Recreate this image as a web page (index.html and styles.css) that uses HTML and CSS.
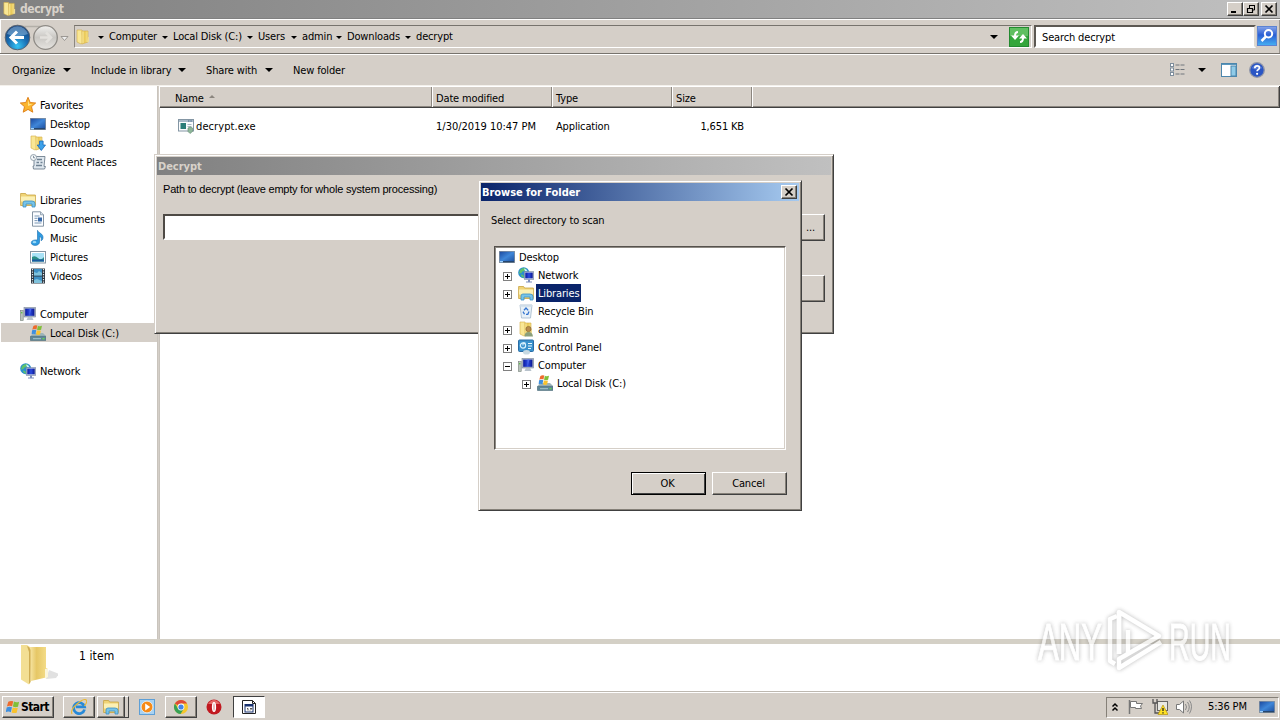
FILE: index.html
```html
<!DOCTYPE html>
<html lang="en">
<head>
<meta charset="utf-8">
<title>decrypt</title>
<link rel="stylesheet" href="styles.css">
</head>
<body>
<svg class="defs" width="0" height="0">
  <defs>
    <linearGradient id="gFold" x1="0" x2="1"><stop offset="0" stop-color="#fff2a8"/><stop offset=".45" stop-color="#e9c755"/><stop offset="1" stop-color="#f8e48c"/></linearGradient>
    <linearGradient id="gDesk" x1="0" y1="0" x2="1" y2="1"><stop offset="0" stop-color="#1c4aa0"/><stop offset=".5" stop-color="#3f86d8"/><stop offset="1" stop-color="#1d4f9f"/></linearGradient>
    <linearGradient id="gScr" x1="0" x2="1"><stop offset="0" stop-color="#0a1aa0"/><stop offset=".5" stop-color="#2b4be0"/><stop offset="1" stop-color="#0b1690"/></linearGradient>
    <radialGradient id="gBack" cx=".5" cy=".85" r=".8"><stop offset="0" stop-color="#35c4f4"/><stop offset=".5" stop-color="#1a6fb4"/><stop offset="1" stop-color="#123f7c"/></radialGradient>
    <linearGradient id="gFwd" x1="0" y1="0" x2="0" y2="1"><stop offset="0" stop-color="#f1f0ee"/><stop offset=".5" stop-color="#c9c7c3"/><stop offset="1" stop-color="#e6e4e0"/></linearGradient>
    <linearGradient id="gBig" x1="0" x2="1"><stop offset="0" stop-color="#f9e9ac"/><stop offset=".4" stop-color="#e6c766"/><stop offset="1" stop-color="#f6e08e"/></linearGradient>
    <symbol id="folder" viewBox="0 0 16 16"><path d="M2 1h5l1 13-2 1-4-2z" fill="#f9e795" stroke="#d3ad45" stroke-width=".6"/><path d="M7 2h6v11l-6 2z" fill="url(#gFold)" stroke="#d3ad45" stroke-width=".6"/><path d="M13 8h1v5h-2z" fill="#efdc96"/></symbol>
    <symbol id="desktop" viewBox="0 0 16 16"><rect x="0" y="2" width="16" height="12" fill="#8c949c"/><rect x=".7" y="2.7" width="14.6" height="10" fill="url(#gDesk)"/><rect x="1" y="12" width="14" height="1.4" fill="#24466f"/><rect x="1" y="12" width="3" height="1.4" fill="#9bd0ff"/></symbol>
    <symbol id="downloads" viewBox="0 0 16 16"><use href="#folder" x="-1" y="0"/><path d="M9.500 6h3.600v4h2.400L11.300 15.500 7.200 10h2.300z" fill="#3ba1ea" stroke="#1a69b8" stroke-width=".8"/></symbol>
    <symbol id="recent" viewBox="0 0 16 16"><path d="M4 2.500h11l-1 10h1.500l-1 2.500H3.500L3 12h1z" fill="#dfe7ee" stroke="#71808e" stroke-width=".9"/><path d="M7 5.500h5M6.500 8.500h2.500m1.500 0h2M6 11.500h6" stroke="#6f8293" stroke-width="1.400"/><circle cx="3.500" cy="3.500" r="3" fill="#f6f9fb" stroke="#8a98a4" stroke-width=".9"/><path d="M3.500 1.800v2h1.500" fill="none" stroke="#526679" stroke-width=".7"/></symbol>
    <symbol id="star" viewBox="0 0 16 16"><path d="M8 .3l2.200 5.200 5.500.5-4.200 3.700 1.300 5.500L8 12.400l-4.800 2.800 1.300-5.500L.3 6l5.500-.5z" fill="#fbb52c" stroke="#dc7c14" stroke-width=".9"/><path d="M8 3l1.300 4 3.500.3L8 9z" fill="#ffe48a"/></symbol>
    <symbol id="libs" viewBox="0 0 16 16"><path d="M.6 1.500h5l1 1.500h8.800v10.500H.6z" fill="#f0d477" stroke="#c8a341" stroke-width=".8"/><path d="M1 4.500h14v5H1z" fill="#fbf0b4"/><path d="M3 15V11q0-2 2-2h7q3 0 3 2.500V15h-3v-3H6v3z" fill="#77c4e8" stroke="#3e8fc4" stroke-width=".8"/></symbol>
    <symbol id="docs" viewBox="0 0 16 16"><path d="M2.500.8h8l3 3v11.400h-11z" fill="#fbfdff" stroke="#78899a" stroke-width=".9"/><path d="M10.500.8v3h3" fill="#d4e0ea" stroke="#78899a" stroke-width=".7"/><path d="M4.500 5h5M4.500 7.300h3M4.500 9.600h3M4.500 12h7" stroke="#7b97b4"/><rect x="8" y="6.500" width="4" height="4" fill="#3768a8"/></symbol>
    <symbol id="music" viewBox="0 0 16 16"><path d="M7.500.3c1 3 6 3.200 5.500 7.700-.2 1.700-1.200 2.500-2 2.700.9-2.700-.3-3.900-1.500-4.200V12c0 2.200-2 3.400-4.300 3.400-2.200 0-3.900-.8-3.900-2.700S3.500 9.700 7.500 10z" fill="#2f9be0" stroke="#1a6fb0" stroke-width=".6"/><ellipse cx="4.500" cy="12.200" rx="1.900" ry="1.100" fill="#9bdaf8"/></symbol>
    <symbol id="pics" viewBox="0 0 16 16"><rect x=".5" y="2.500" width="15" height="11.500" fill="#fff" stroke="#8695a2"/><rect x="2" y="4" width="12" height="8.500" fill="#a9e2f6"/><path d="M2 8q3-2 6 1t6-1v4.500H2z" fill="#2a8f86"/><path d="M2 10.500h12v2H2z" fill="#1b5aa0"/></symbol>
    <symbol id="video" viewBox="0 0 16 16"><rect x="1" y=".5" width="14" height="15" fill="#2d3640"/><rect x="4" y="1" width="8" height="6.500" fill="#3d8fc4"/><rect x="4" y="8.500" width="8" height="6.500" fill="#3d8fc4"/><path d="M4 4l3 1 2-2 3 2v2.500H4zM4 12l3-1 5 2v2H4z" fill="#7fc2dc"/><path d="M2.500 1v14M13.500 1v14" stroke="#e6edf2" stroke-width="1.200" stroke-dasharray="1.300 1.200"/></symbol>
    <symbol id="computer" viewBox="0 0 16 16"><rect x=".4" y="4.500" width="2.800" height="10" fill="#b9c2bc" stroke="#77827a" stroke-width=".6"/><rect x="1" y="6" width="1.400" height="1.400" fill="#5fc04c"/><rect x="4" y="1.500" width="11.600" height="9.500" fill="#aeb9c8" stroke="#79859a" stroke-width=".6"/><rect x="5.200" y="2.600" width="9.200" height="7.200" fill="url(#gScr)"/><path d="M9.500 2.600h2L9.500 9.800z" fill="#4c68e8"/><path d="M8 11h4l1.500 3h-7z" fill="#b8c2cc"/></symbol>
    <symbol id="flag" viewBox="0 0 16 16"><path d="M2.500 2.500Q5 .8 7.700 2L6.600 7.300Q4 6 1 7.500z" fill="#ee6b2d"/><path d="M8.500 2.200Q11 3.600 14 2.400L12.800 7.800Q10 8.900 7.400 7.500z" fill="#80bf38"/><path d="M.8 8.400Q3.500 7 6.400 8.200L5.200 13.500Q2.500 12.200-.3 13.600z" fill="#3e8fdf"/><path d="M7.200 8.400Q10 9.700 12.600 8.700L11.400 14Q8.800 15.100 6 13.800z" fill="#f9c22e"/></symbol>
    <symbol id="disk" viewBox="0 0 16 16"><path d="M3 8h10l3 3v4H.5v-3.500z" fill="#9db4ba"/><path d="M.5 11.300h15.300v4.300H.5z" fill="#5f8797" stroke="#41616f" stroke-width=".5"/><path d="M3 13.700h8" stroke="#a9c8cf"/><rect x="12.500" y="13" width="2" height="1.300" fill="#63db49"/><svg x="1.500" y="-1" width="12" height="12" viewBox="0 0 16 16"><use href="#flag" width="16" height="16"/></svg></symbol>
    <symbol id="network" viewBox="0 0 16 16"><circle cx="5.700" cy="5.700" r="5.500" fill="#2a8fce"/><path d="M2 3Q5 0 8 1.500 7 4 4.500 4.500 3.500 7 1 6.500zM3 7.500q3 0 3 3.400Q3 10 3 7.500z" fill="#5fc36b"/><path d="M6 1.500q3 .5 3.500 3L7 4z" fill="#d2f3ff"/><rect x="6.300" y="4.700" width="9.400" height="7.600" fill="#c3cddd" stroke="#7583a0" stroke-width=".6"/><rect x="7.300" y="5.600" width="7.400" height="5.700" fill="url(#gScr)"/><path d="M10 12.500h2v2h2v1H8v-1h2z" fill="#7b8dbd"/></symbol>
    <symbol id="bin" viewBox="0 0 16 16"><path d="M2 2h12l-1.500 13h-9z" fill="#e8f1f8" stroke="#a2b6c9" stroke-width=".8"/><path d="M2 2h12v1.700H2z" fill="#cfdde9"/><path d="M6 7.200L8 5l2.200 2.400M11 8.500L9.800 11.300H8M6.500 11.300L5 8.600" fill="none" stroke="#3474cf" stroke-width="1.300"/></symbol>
    <symbol id="user" viewBox="0 0 16 16"><use href="#folder"/><circle cx="10.500" cy="8" r="2.600" fill="#b98c4c" stroke="#7c5b2c" stroke-width=".6"/><path d="M6.500 15.500q0-4.500 4-4.500t4.500 4.500z" fill="#8a9f7b"/></symbol>
    <symbol id="cpl" viewBox="0 0 16 16"><rect x=".5" y="1" width="15" height="11.500" rx="1" fill="#3a92cd" stroke="#2a6ca5"/><circle cx="5" cy="6.500" r="2.600" fill="none" stroke="#d9f3ff" stroke-width="1.200"/><path d="M5 6.500V4h2.500M10 4.500h4M10 7h4M10 9.500h3" stroke="#e8f8ff" fill="none"/><ellipse cx="8.500" cy="13.300" rx="3.500" ry="2.300" fill="#c7d9e2"/></symbol>
    <symbol id="exe" viewBox="0 0 16 16"><rect x=".5" y="1.500" width="15" height="11.500" fill="#fafcfd" stroke="#8496a4"/><path d="M1 3h14" stroke="#a9bac8" stroke-width="2" /><path d="M10 3h4" stroke="#466a8c" stroke-dasharray="1 .6"/><rect x="2.500" y="5" width="5.500" height="6" fill="#2a7d78"/><path d="M9.500 6.500h4M9.500 8.500h4" stroke="#a8b9c3"/><path d="M10 10q2-2 4.500 0v3.500l-2.500 2-2-2z" fill="#8fb79a" stroke="#628b70" stroke-width=".6"/></symbol>
  </defs>
</svg>

<div class="screen">
  <header class="titlebar">
    <svg class="title-icon" viewBox="0 0 16 16"><use href="#folder"/></svg>
    <span class="title-text">decrypt</span>
    <div class="win-buttons">
      <button class="wb"><svg viewBox="0 0 12 10"><path d="M2 8h5" stroke="#000" stroke-width="2"/></svg></button>
      <button class="wb"><svg viewBox="0 0 12 10"><path d="M4.500 1v3M4 1.500h6M9.500 1v5H8" fill="none" stroke="#000"/><path d="M2.500 4.500h5v4h-5zM2 4.500h6" fill="none" stroke="#000" stroke-width="1.200"/></svg></button>
      <button class="wb wb-close"><svg viewBox="0 0 12 10"><path d="M2.500 1.500l7 7m0-7l-7 7" stroke="#000" stroke-width="1.700"/></svg></button>
    </div>
  </header>

  <nav class="navbar">
    <svg class="nav-arrows" viewBox="0 0 72 30">
      <path d="M22 5.500H42" fill="none" stroke="#b3afa8" stroke-width="1.500"/>
      <circle cx="17.500" cy="16.500" r="12.300" fill="url(#gBack)" stroke="#5b6470"/>
      <path d="M7 13a11 11 0 0 1 21 0q-10 4-21 0z" fill="#8fb9df" opacity=".55"/>
      <path d="M11 16.500h13M17 10.500l-6 6 6 6" fill="none" stroke="#fff" stroke-width="3"/>
      <circle cx="45.500" cy="16.500" r="11.800" fill="url(#gFwd)" stroke="#8d8a85" stroke-width="1.300"/>
      <path d="M40 16.500h11M46 11.500l5 5-5 5" fill="none" stroke="#e3e1dd" stroke-width="2.500"/>
      <path d="M61 15.500h7l-3.500 4z" fill="#eee" stroke="#8a8782" stroke-width=".8"/>
    </svg>
    <div class="address">
      <svg class="ic" viewBox="0 0 16 16"><use href="#folder"/></svg>
      <div class="crumbs"><i></i><span class="c1">Computer</span><i></i><span class="c2">Local Disk (C:)</span><i></i><span class="c3">Users</span><i></i><span class="c4">admin</span><i></i><span class="c5">Downloads</span><i></i><span>decrypt</span></div>
      <i class="tri addr-drop"></i>
      <svg class="refresh" viewBox="0 0 20 20"><rect width="20" height="20" fill="#34a63b"/><rect width="20" height="9" fill="#60bf61"/><rect x=".5" y=".5" width="19" height="19" fill="none" stroke="#238a30"/><path d="M9 5Q6 5 6 9M11 15q3 0 3-4" fill="none" stroke="#fff" stroke-width="2"/><path d="M2 8.500h8l-4 4.500zM10 11.500h8L14 7z" fill="#fff"/></svg>
    </div>
    <div class="search">Search decrypt</div>
    <svg class="search-btn" viewBox="0 0 20 20"><defs><linearGradient id="gs" x1="0" y1="0" x2="0" y2="1"><stop offset="0" stop-color="#8da9ea"/><stop offset=".45" stop-color="#2b5fd4"/><stop offset="1" stop-color="#48b5f4"/></linearGradient></defs><rect width="20" height="20" fill="url(#gs)"/><rect x=".5" y=".5" width="19" height="19" fill="none" stroke="#5c83d2"/><circle cx="11.500" cy="7.800" r="3.700" fill="none" stroke="#fff" stroke-width="2"/><path d="M9 10.500L4.500 15" stroke="#fff" stroke-width="2.500"/></svg>
  </nav>

  <div class="toolbar">
    <span class="t1">Organize</span><i class="tri"></i>
    <span class="t2">Include in library</span><i class="tri"></i>
    <span class="t3">Share with</span><i class="tri"></i>
    <span class="t4">New folder</span>
    <div class="tool-icons">
      <svg width="16" height="14" viewBox="0 0 16 14"><g fill="#fff" stroke="#7d8d9c"><rect x=".5" y=".5" width="3" height="3"/><rect x=".5" y="5" width="3" height="3"/><rect x=".5" y="9.500" width="3" height="3"/></g><path d="M5.500 2h10M5.500 6.500h10M5.500 11h10" stroke="#70767c" stroke-dasharray="4 1"/></svg>
      <i class="tri"></i>
      <svg width="16" height="14" viewBox="0 0 16 14"><rect x=".5" y=".5" width="15" height="13" fill="#fff" stroke="#4c86ac"/><path d="M1 1.500h14" stroke="#5b97bd"/><rect x="10" y="3" width="5" height="10" fill="#8fcbe8" stroke="#4c86ac"/></svg>
      <svg width="16" height="16" viewBox="0 0 16 16"><circle cx="8" cy="8" r="7.300" fill="#2a55c4" stroke="#9096a8" stroke-width="1.300"/><path d="M2.500 6Q8-1 13.500 6 8 9 2.500 6z" fill="#7b9ce6" opacity=".5"/><path d="M5.800 6.200q0-2.400 2.300-2.400t2.300 2q0 1.300-1.300 1.900-1 .5-1 1.600" fill="none" stroke="#fff" stroke-width="1.700"/><circle cx="8.100" cy="11.800" r="1.100" fill="#fff"/></svg>
    </div>
  </div>

  <main class="content">
    <aside class="sidebar">
      <div class="row top"><svg class="ic"><use href="#star"/></svg><span>Favorites</span></div>
      <div class="row"><svg class="ic"><use href="#desktop"/></svg><span>Desktop</span></div>
      <div class="row"><svg class="ic"><use href="#downloads"/></svg><span>Downloads</span></div>
      <div class="row"><svg class="ic"><use href="#recent"/></svg><span>Recent Places</span></div>
      <div class="row top gap"><svg class="ic"><use href="#libs"/></svg><span>Libraries</span></div>
      <div class="row"><svg class="ic"><use href="#docs"/></svg><span>Documents</span></div>
      <div class="row"><svg class="ic"><use href="#music"/></svg><span>Music</span></div>
      <div class="row"><svg class="ic"><use href="#pics"/></svg><span>Pictures</span></div>
      <div class="row"><svg class="ic"><use href="#video"/></svg><span>Videos</span></div>
      <div class="row top gap"><svg class="ic"><use href="#computer"/></svg><span>Computer</span></div>
      <div class="row selected"><svg class="ic"><use href="#disk"/></svg><span>Local Disk (C:)</span></div>
      <div class="row top gap"><svg class="ic"><use href="#network"/></svg><span>Network</span></div>
    </aside>
    <section class="files">
      <div class="cols head"><div class="name">Name <b class="sort"></b></div><div>Date modified</div><div>Type</div><div>Size</div><div></div></div>
      <div class="cols file"><div class="name"><svg class="ic"><use href="#exe"/></svg><span>decrypt.exe</span></div><div class="date">1/30/2019 10:47 PM</div><div>Application</div><div class="size">1,651 KB</div></div>
    </section>
  </main>

  <footer class="details">
    <svg class="big-folder" viewBox="0 0 38 42"><path d="M26 35l3-9 10 4-3 4z" fill="#c4c4c4" opacity=".5"/><path d="M9 3h17v21l2 1v8l-17 4z" fill="url(#gBig)"/><path d="M1 1h6q3 1 3.500 4v33l-1.500 2.500-8-5z" fill="#f3df94"/><path d="M7 2q3 1 3.500 4v32L9 40V8z" fill="#cfad54"/><path d="M25 25h3v8l-3 1.500z" fill="#fbf6dc"/></svg>
    <span>1 item</span>
  </footer>

  <div class="taskbar">
    <button class="start raised"><svg viewBox="-1 0 17 16"><use href="#flag" width="16" height="16"/></svg><span>Start</span></button>
    <button class="task raised ie"><svg class="ic" viewBox="0 0 16 16"><path d="M13.500 10.500A5.500 5.500 0 1 1 13.500 7.800H5" fill="none" stroke="#2789d8" stroke-width="2.800"/><path d="M1 15Q-1 11 6 5T15.300 1q1.500 2-2 6" fill="none" stroke="#e9b833" stroke-width="1.100"/></svg></button>
    <div class="stack"><button class="task raised explorer"><svg class="ic"><use href="#libs"/></svg></button><b></b></div>
    <svg class="ic wmp" viewBox="0 0 16 16"><rect x=".5" y=".5" width="15" height="15" fill="#a8d2f2" stroke="#5e9fd6"/><circle cx="8" cy="8" r="5.800" fill="#f68a17" stroke="#fff" stroke-width=".6"/><path d="M6.200 4.500v7l5-3.500z" fill="#fff"/></svg>
    <button class="task raised chrome"><svg class="ic" viewBox="0 0 16 16"><circle cx="8" cy="8" r="7" fill="#f6c72c"/><path d="M8 8L1.900 4.500A7 7 0 0 1 14.100 4.500H8z" fill="#dd4a3a"/><path d="M1.900 4.500A7 7 0 0 0 7.500 15L11 9.500 5 9.500z" fill="#38a155"/><circle cx="8" cy="8" r="3.400" fill="#fff"/><circle cx="8" cy="8" r="2.600" fill="#4385e8"/></svg></button>
    <svg class="ic opera" viewBox="0 0 16 16"><circle cx="8" cy="8" r="7.500" fill="#c11920"/><path d="M2 5Q8-3 14 5z" fill="#e56a66"/><ellipse cx="8" cy="8" rx="2.100" ry="5" fill="#fff"/><ellipse cx="8" cy="8" rx=".9" ry="3.800" fill="#e9b5b2"/></svg>
    <div class="task active"><svg class="ic" viewBox="0 0 16 16"><path d="M1.500 1.500h10l3 3v10h-13z" fill="#fff" stroke="#222"/><path d="M11.500 1.500v3h3" fill="none" stroke="#222"/><rect x="4" y="5.500" width="8" height="7.500" fill="#fff" stroke="#17306e"/><path d="M4 6.500h8" stroke="#17306e" stroke-width="2"/><path d="M6 9.500h1v2M9 9.500h2l-2 2" fill="none" stroke="#555"/></svg></div>
    <div class="tray">
      <svg width="8" height="11" viewBox="0 0 8 11"><path d="M1.500 4.500L4 2l2.500 2.500M1.500 8.500L4 6l2.500 2.500" fill="none" stroke="#000" stroke-width="1.500"/></svg>
      <svg class="ic t-flag" viewBox="0 0 16 16"><path d="M1.500 1v14" stroke="#777" stroke-width="1.500"/><path d="M2.500 2.500h6v2h6l-2 2.500 1 2.500h-6v-1h-5z" fill="#fff" stroke="#777"/></svg>
      <svg class="ic t-net" viewBox="0 0 16 16"><rect x="5.500" y="2.500" width="10" height="9" fill="#e9e9e4" stroke="#666"/><path d="M1 0v4h4V0M3 4v10h5" fill="none" stroke="#555" stroke-width="1.300"/><path d="M11 6l5 9.500H6z" fill="#ffe223" stroke="#b6930d" stroke-width=".7"/><path d="M11 9v3m0 1.200v1.200" stroke="#222" stroke-width="1.300"/></svg>
      <svg class="ic t-vol" viewBox="0 0 16 16"><path d="M.5 5.500h3L7.500 2v12L3.500 10.500h-3z" fill="#fff" stroke="#777"/><path d="M9.500 5q2 3 0 6M11.500 3q3.500 5 0 10M13.500 1.500q4 6 0 13" fill="none" stroke="#888"/></svg>
      <span>5:36 PM</span>
      <svg class="ic"><use href="#desktop"/></svg>
    </div>
  </div>

  <div class="dialog decrypt-dlg">
    <div class="dlg-title">Decrypt</div>
    <div class="path-label">Path to decrypt (leave empty for whole system processing)</div>
    <div class="path-line"><div class="path-input"></div><button class="raised dots">...</button></div>
    <button class="raised go"></button>
  </div>

  <div class="dialog browse-dlg">
    <div class="dlg-title active-title">Browse for Folder<button class="wb"><svg viewBox="0 0 12 10"><path d="M2.500 1.500l7 7m0-7l-7 7" stroke="#000" stroke-width="1.700"/></svg></button></div>
    <div class="prompt">Select directory to scan</div>
    <div class="tree">
      <div class="node root"><svg class="ic"><use href="#desktop"/></svg><span>Desktop</span></div>
      <div class="node"><b class="pm plus"></b><svg class="ic"><use href="#network"/></svg><span>Network</span></div>
      <div class="node"><b class="pm plus"></b><svg class="ic"><use href="#libs"/></svg><span class="hl">Libraries</span></div>
      <div class="node"><b class="pm none"></b><svg class="ic"><use href="#bin"/></svg><span>Recycle Bin</span></div>
      <div class="node"><b class="pm plus"></b><svg class="ic"><use href="#user"/></svg><span>admin</span></div>
      <div class="node"><b class="pm plus"></b><svg class="ic"><use href="#cpl"/></svg><span>Control Panel</span></div>
      <div class="node"><b class="pm"></b><svg class="ic"><use href="#computer"/></svg><span>Computer</span></div>
      <div class="node sub"><b class="pm plus"></b><svg class="ic"><use href="#disk"/></svg><span>Local Disk (C:)</span></div>
    </div>
    <div class="dlg-buttons"><button class="raised ok">OK</button><button class="raised">Cancel</button></div>
  </div>

  <div class="watermark">
    <span class="wm-any">ANY</span>
    <svg viewBox="0 0 60 66"><g fill="none" stroke="#fff" stroke-width="4.500" stroke-linejoin="round"><path d="M11 9L4 12v42l5 3"/><path d="M13 47V5L53 29 13 52v9L55 35"/><path d="M13 5v42M22 47V23"/></g></svg>
    <span class="wm-run">RUN</span>
  </div>
</div>
</body>
</html>
```
FILE: styles.css
```css
* { box-sizing: border-box; }
body {
  margin: 0;
  font: 11px/14px "DejaVu Sans Condensed", "DejaVu Sans", sans-serif;
  font-stretch: condensed;
  letter-spacing: -0.15px;
  color: #000;
}
button { font: inherit; letter-spacing: inherit; color: inherit; padding: 0; margin: 0; border: 0; background: #d5cfc8; border-radius: 0; }
.defs { position: absolute; }
.screen { position: relative; width: 1280px; height: 720px; overflow: hidden; background: #d5cfc8; display: flex; flex-direction: column; white-space: nowrap; }
.ic { width: 16px; height: 16px; flex: none; display: block; }
.tri { border: 4px solid transparent; border-top-color: #000; border-bottom: 0; width: 0; height: 0; flex: none; }
.raised { border: 1px solid; border-color: #fff #404040 #404040 #fff; box-shadow: inset -1px -1px #858078; background: #d5cfc8; }

.titlebar { height: 18px; flex: none; display: flex; align-items: center; padding: 0 3px 0 2px; background: linear-gradient(90deg, #808080, #c0c0c0); }
.title-icon { width: 15px; height: 16px; }
.title-text { margin-left: 3px; font-size: 12px; font-weight: bold; color: #d8d2ca; letter-spacing: -0.45px; }
.win-buttons { display: flex; margin-left: auto; }
.wb { width: 16px; height: 14px; border: 1px solid; border-color: #fff #404040 #404040 #fff; box-shadow: inset -1px -1px #858078; display: flex; align-items: center; justify-content: center; }
.wb svg { width: 12px; height: 10px; }
.wb-close { margin-left: 2px; }

.navbar { height: 36px; flex: none; display: flex; border-top: 1px solid #808080; border-bottom: 1px solid #77736d; box-shadow: inset 0 1px #fff, inset 1px 0 #fff, inset -1px 0 #9a968f; padding: 2px 2px 0 0; }
.nav-arrows { width: 72px; height: 30px; flex: none; }
.address { width: 958px; height: 23px; margin-top: 4px; margin-left: 2px; display: flex; align-items: center; border: 1px solid; border-color: #77736d #fff #fff #8c8780; }
.crumbs { display: flex; align-items: center; margin-left: 7px; }
.crumbs i { border: 3px solid transparent; border-top-color: #000; border-bottom: 0; margin-right: 5px; margin-top: 1px; }
.crumbs span { flex: none; }
.c1 { width: 53px; }
.c2 { width: 74px; }
.c3 { width: 33px; }
.c4 { width: 34px; }
.c5 { width: 58px; }
.addr-drop { margin-left: auto; margin-right: 11px; }
.refresh { width: 20px; height: 20px; margin-right: 2px; }
.search { width: 222px; height: 23px; margin: 4px 0 0 2px; border: 2px solid; border-color: #5c5852 #ded9d2 #fff #5c5852; background: #fff; padding: 4px 0 0 6px; }
.search-btn { width: 20px; height: 20px; margin: 5px 0 0 1px; }

.toolbar { height: 32px; flex: none; display: flex; align-items: center; border-top: 1px solid #fff; border-bottom: 1px solid #f4f1ec; padding-left: 12px; }
.toolbar span { padding-top: 1px; }
.t1 { width: 51px; }
.t2 { width: 87px; margin-left: 20px; }
.t3 { width: 59px; margin-left: 20px; }
.t4 { margin-left: 20px; }
.tool-icons { margin-left: auto; margin-right: 15px; display: flex; align-items: center; }
.tool-icons .tri { margin: 0 15px 0 12px; }
.tool-icons svg + svg { margin-left: 12px; }

.content { height: 553px; flex: none; display: flex; }
.sidebar { width: 158px; background: #fff; border-right: 1px solid #c9c4bd; padding-top: 9px; }
.row { height: 19px; display: flex; align-items: center; gap: 4px; padding-left: 30px; }
.row span { padding-top: 2px; }
.row.top { padding-left: 20px; }
.row.gap { margin-top: 19px; }
.selected { background: #d5cfc8; margin-left: 1px; padding-left: 29px; }
.files { flex: 1; margin-left: 1px; background: #fff; border-left: 1px solid #c9c4bd; }
.cols { display: grid; grid-template-columns: 273px 120px 120px 80px 1fr; }
.head { height: 22px; background: #d5cfc8; border-bottom: 1px solid #404040; }
.head div { padding: 6px 0 0 3px; border-right: 1px solid #404040; border-left: 1px solid #fff; box-shadow: inset 0 1px #fff, inset 0 -1px #8b867f, inset -1px 0 #8b867f; margin-left: -1px; }
.head .name { padding-left: 15px; }
.sort { display: inline-block; border: 3px solid transparent; border-bottom-color: #8b867f; border-top: 0; vertical-align: 4px; margin-left: 2px; }
.file { align-items: center; height: 36px; }
.file div { padding: 2px 0 0 3px; }
.file .name { display: flex; align-items: center; gap: 2px; padding: 0 0 0 18px; letter-spacing: 0.1px; }
.file .name span { padding-top: 2px; }
.file .date { letter-spacing: 0; }
.file .size { text-align: right; padding-right: 9px; }

.details { height: 53px; flex: none; display: flex; background: #fff; border-top: 5px solid #d4d0c6; border-bottom: 1px solid #bdb8b0; padding-left: 20px; }
.big-folder { width: 38px; height: 42px; }
.details span { margin: 5px 0 0 21px; font-size: 12px; letter-spacing: 0.1px; }

.taskbar { height: 28px; flex: none; display: flex; align-items: center; border-top: 1px solid #fff; padding: 1px 1px 0 2px; }
.start { width: 52px; height: 22px; display: flex; align-items: center; font-weight: bold; font-size: 12px; letter-spacing: -0.6px; padding-left: 2px; gap: 0; }
.start svg { width: 16px; height: 16px; }
.task { width: 32px; height: 22px; display: flex; align-items: center; justify-content: center; }
.ie { margin-left: 9px; }
.stack { display: flex; margin-left: 2px; }
.stack b { width: 4px; height: 22px; border-top: 1px solid #fff; border-right: 1px solid #404040; border-bottom: 1px solid #404040; }
.explorer { width: 28px; }
.wmp { margin-left: 10px; }
.chrome { margin-left: 10px; }
.opera { margin-left: 9px; }
.active { margin-left: 11px; background: #fff; border: 1px solid; border-color: #404040 #fff #fff #404040; }
.tray { margin-left: auto; width: 173px; height: 21px; display: flex; align-items: center; border: 1px solid; border-color: #858078 #fff #fff #858078; padding-left: 4px; }
.t-flag { margin-left: 9px; }
.t-net { margin-left: 8px; }
.t-vol { margin-left: 8px; }
.tray span { width: 41px; margin: 0 10px 0 16px; }

.dialog { position: absolute; background: #d5cfc8; border: 1px solid; border-color: #d5cfc8 #404040 #404040 #d5cfc8; box-shadow: inset 1px 1px #fff, inset -1px -1px #858078; padding: 2px; }
.dlg-title { height: 18px; padding: 1px 0 0 1px; font-weight: bold; line-height: 18px; color: #d8d2ca; background: linear-gradient(90deg, #808080, #c0c0c0); letter-spacing: -0.05px; }
.decrypt-dlg { left: 154px; top: 154px; width: 680px; height: 180px; }
.path-label { margin: 7px 0 0 6px; font-family: "Liberation Sans", Arial, sans-serif; letter-spacing: -0.2px; }
.path-line { display: flex; margin: 18px 6px 0 6px; justify-content: space-between; }
.path-input { width: 560px; height: 26px; background: #fff; border: 2px solid; border-color: #4e4a45 #d5cfc8 #fff #4e4a45; }
.dots { width: 75px; height: 27px; padding-left: 46px; }
.go { display: block; width: 75px; height: 27px; margin: 34px 6px 0 auto; }
.browse-dlg { left: 478px; top: 180px; width: 324px; height: 331px; }
.active-title { display: flex; color: #fff; background: linear-gradient(90deg, #0a246a, #a6caf0); }
.active-title .wb { margin: 1px 2px 0 auto; }
.prompt { margin: 13px 0 0 10px; }
.tree { margin: 18px 0 0 13px; width: 292px; height: 204px; background: #fff; border: 1px solid; border-color: #55514c #fff #fff #55514c; box-shadow: inset 1px 1px #8f8b85, inset -1px -1px #d5cfc8; padding: 1px 0 0 4px; }
.node { height: 18px; display: flex; align-items: center; padding-left: 4px; }
.node.root { padding-left: 0; }
.node.sub { padding-left: 23px; }
.node span { height: 18px; line-height: 20px; padding: 0 2px; margin-left: 2px; }
.hl { background: #0a246a; color: #fff; }
.pm { width: 9px; height: 9px; margin-right: 6px; margin-top: 3px; border: 1px solid #808080; background: linear-gradient(#000, #000) center / 5px 1px no-repeat; flex: none; }
.plus { background: linear-gradient(#000, #000) center / 5px 1px no-repeat, linear-gradient(#000, #000) center / 1px 5px no-repeat; }
.none { visibility: hidden; }
.dlg-buttons { display: flex; justify-content: flex-end; gap: 6px; margin: 22px 12px 0 0; }
.dlg-buttons button { width: 75px; height: 23px; padding-right: 2px; }
.dlg-buttons .ok { border-color: #000; box-shadow: inset 1px 1px #fff, inset -1px -1px #404040; }

.watermark { position: absolute; left: 1038px; top: 606px; width: 198px; height: 70px; filter: drop-shadow(0 0 2px rgba(90, 90, 90, .6)); opacity: .7; color: #fff; font: 52px/70px "Liberation Sans", Arial, sans-serif; letter-spacing: 0; display: flex; -webkit-text-stroke: 1px #fff; }
.watermark span { width: 64px; transform-origin: 0 50%; margin-top: 1px; }
.watermark .wm-any { transform: scaleX(.6); }
.watermark .wm-run { transform: scaleX(.55); }
.watermark svg { width: 60px; height: 66px; margin: 1px 3px 0 4px; flex: none; }
```
